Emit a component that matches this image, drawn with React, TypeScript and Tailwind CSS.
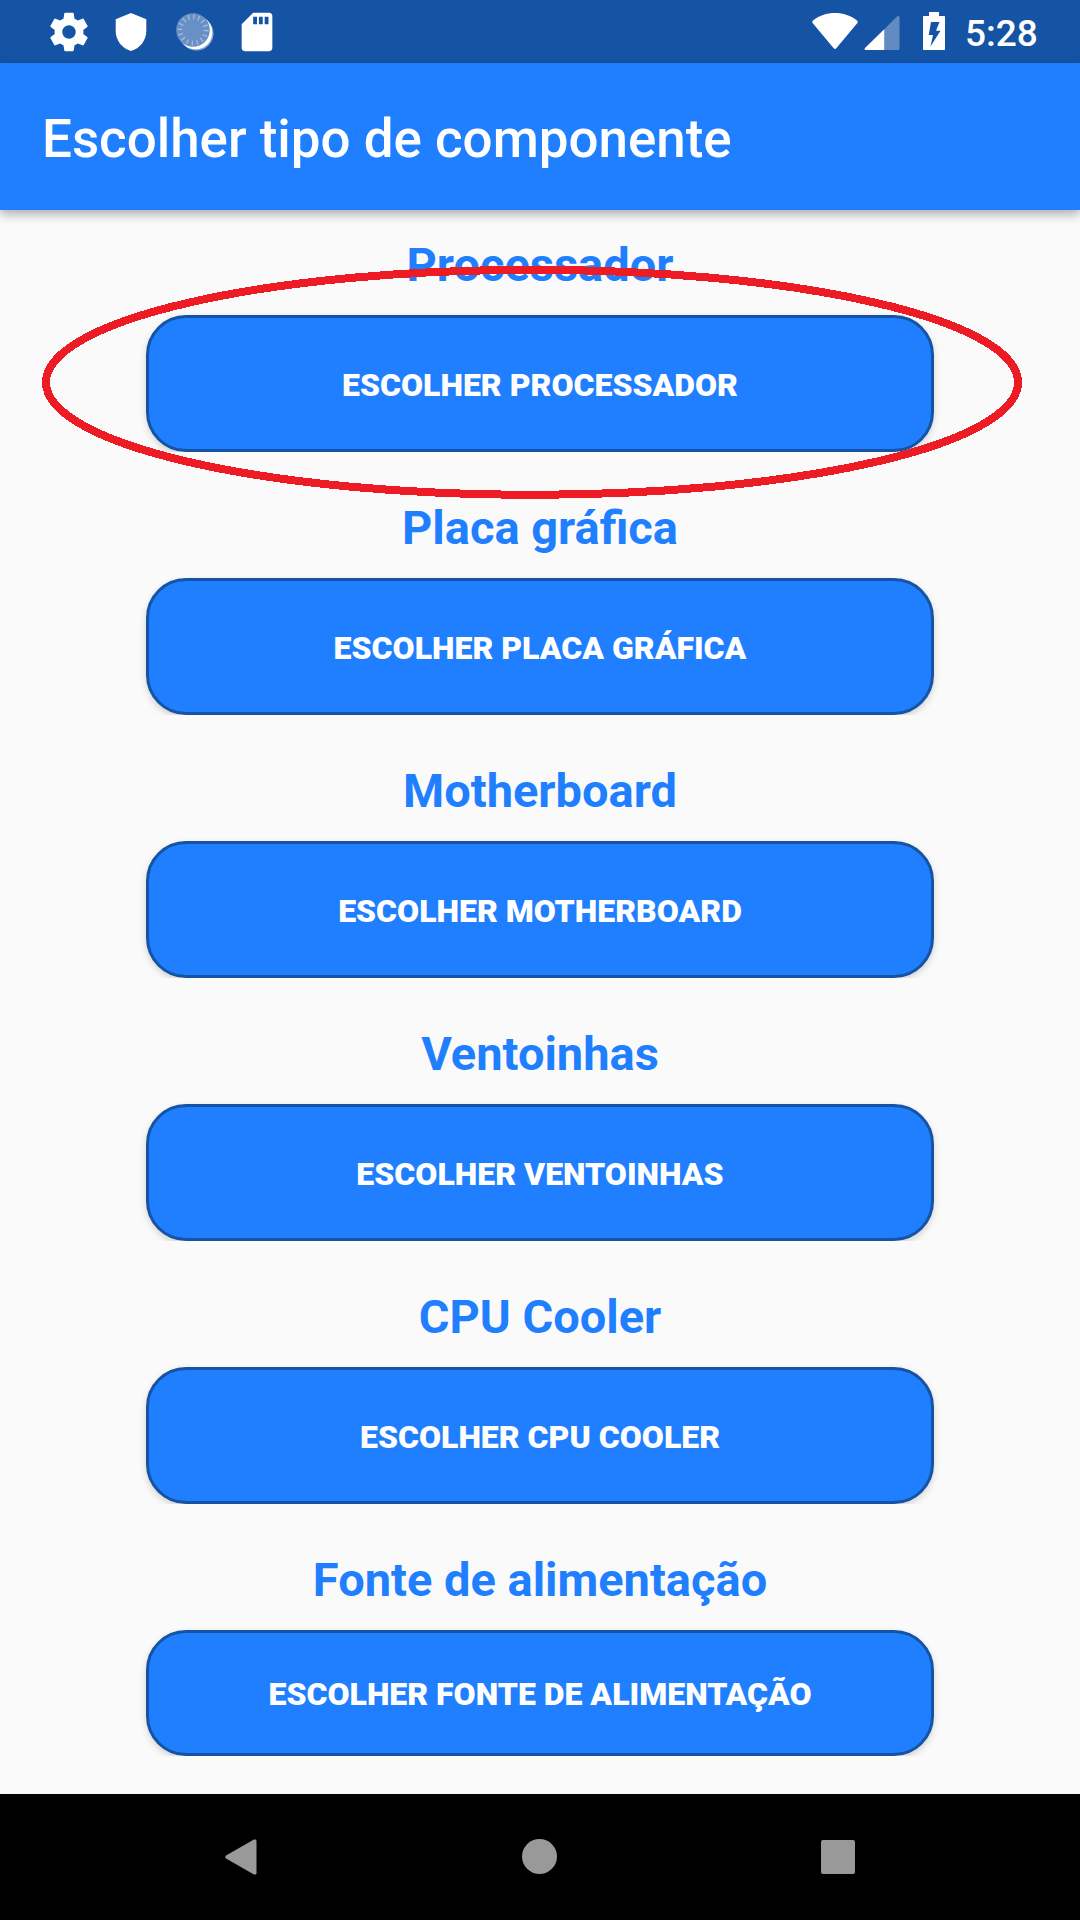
const SECTIONS = [
  { title: 'Processador', action: 'Escolher processador' },
  { title: 'Placa gráfica', action: 'Escolher placa gráfica' },
  { title: 'Motherboard', action: 'Escolher motherboard' },
  { title: 'Ventoinhas', action: 'Escolher ventoinhas' },
  { title: 'CPU Cooler', action: 'Escolher CPU Cooler' },
  { title: 'Fonte de alimentação', action: 'Escolher fonte de alimentação', last: true },
];

function GearIcon() {
  return (
    <svg className="h-[46px] w-[46px]" viewBox="0 0 24 24" fill="#fff">
      <path d="M19.43 12.98c.04-.32.07-.64.07-.98s-.03-.66-.07-.98l2.11-1.65c.19-.15.24-.42.12-.64l-2-3.46c-.12-.22-.39-.3-.61-.22l-2.49 1c-.52-.4-1.08-.73-1.69-.98l-.38-2.65C14.46 2.18 14.25 2 14 2h-4c-.25 0-.46.18-.49.42l-.38 2.65c-.61.25-1.17.59-1.69.98l-2.49-1c-.23-.09-.49 0-.61.22l-2 3.46c-.13.22-.07.49.12.64l2.11 1.65c-.04.32-.07.65-.07.98s.03.66.07.98l-2.11 1.65c-.19.15-.24.42-.12.64l2 3.46c.12.22.39.3.61.22l2.49-1c.52.4 1.08.73 1.69.98l.38 2.65c.03.24.24.42.49.42h4c.25 0 .46-.18.49-.42l.38-2.65c.61-.25 1.17-.59 1.69-.98l2.49 1c.23.09.49 0 .61-.22l2-3.46c.12-.22.07-.49-.12-.64l-2.11-1.65zM12 15.5c-1.93 0-3.5-1.57-3.5-3.5s1.57-3.5 3.5-3.5 3.5 1.57 3.5 3.5-1.57 3.5-3.5 3.5z" />
    </svg>
  );
}

function ShieldIcon() {
  return (
    <svg className="h-[38px] w-[32px]" viewBox="0 0 32 38" fill="#fff">
      <path d="M16 0 31.3 6.2V18c0 9.5-6.5 17.500-15.300 20C7.200 35.500.7 27.500.7 18V6.200Z" />
    </svg>
  );
}

function SpinnerIcon() {
  return (
    <svg className="h-[40px] w-[40px]" viewBox="0 0 40 40">
      <circle cx="20.500" cy="21.500" r="17" fill="#8aaad5" />
      <circle cx="19.500" cy="20.500" r="16.800" fill="#fff" />
      <circle cx="17" cy="18" r="16.800" fill="#6890c6" />
      <circle cx="17" cy="18" r="13" fill="none" stroke="#a3bbdc" strokeWidth="5" strokeDasharray="1.300 3.784" />
    </svg>
  );
}

function SdIcon() {
  return (
    <svg className="h-[46px] w-[46px]" viewBox="0 0 24 24" fill="#fff">
      <path d="M18.400 2H10L4 8v12.400C4 21.300 4.700 22 5.600 22h12.800c.9 0 1.600-.7 1.600-1.600V3.600C20 2.700 19.300 2 18.400 2zM12 8h-2V4h2v4zm3 0h-2V4h2v4zm3 0h-2V4h2v4z" />
    </svg>
  );
}

function WifiIcon() {
  return (
    <svg className="h-[37px] w-[46px]" viewBox="0 0 46 37" fill="#fff">
      <path d="M.8 10.200C-.1 9.300.1 8.300 1 7.600 7 2.600 14.800 0 23 0s16 2.600 22 7.600c.9.7 1.100 1.700.2 2.600L24.300 35.300c-.8.9-1.800.9-2.600 0Z" />
    </svg>
  );
}

function SignalIcon() {
  return (
    <svg className="h-[36px] w-[36px]" viewBox="0 0 36 36">
      <path d="M20 14.500 33 1.500c1-1 2.500-.5 2.500 1V33.500c0 1-.5 1.500-1.500 1.500H20Z" fill="#628bc2" />
      <path d="M20.200 14.300V35H2C.4 35 .1 34 1 33Z" fill="#fff" />
    </svg>
  );
}

function BatteryIcon() {
  return (
    <svg className="h-[38px] w-[22px]" viewBox="0 0 22 38" fill="#fff">
      <path fillRule="evenodd" d="M6 0h10v4h5c.7 0 1 .3 1 1v32c0 .7-.3 1-1 1H1c-.7 0-1-.3-1-1V5c0-.7.3-1 1-1h5ZM8 10 5.700 23H10L7.500 34.500 17.500 18.700H13L16.500 10Z" />
    </svg>
  );
}

function StatusBar() {
  return (
    <div className="flex h-[63px] shrink-0 items-start bg-[#1554a5] text-white">
      <div className="ml-[45.5px] mt-[8.5px]"><GearIcon /></div>
      <div className="ml-[23.5px] mt-[12.5px]"><ShieldIcon /></div>
      <div className="ml-[29px] mt-[12px]"><SpinnerIcon /></div>
      <div className="ml-[18px] mt-[8.5px]"><SdIcon /></div>
      <div className="ml-auto mt-[13px]"><WifiIcon /></div>
      <div className="ml-[6px] mt-[15px]"><SignalIcon /></div>
      <div className="ml-[23px] mt-[12px]"><BatteryIcon /></div>
      <div className="ml-[20px] mr-[42px] mt-[13px] w-[73px] whitespace-nowrap text-[37px] leading-[42px] font-medium">5:28</div>
    </div>
  );
}

function Section({ title, action, last }: { title: string; action: string; last?: boolean }) {
  return (
    <section className="flex h-[263px] shrink-0 flex-col">
      <h2 className="pt-[27px] text-center text-[47px] leading-[56px] font-bold text-[#1f7fff]">{title}</h2>
      <div className="mt-[13px] overflow-hidden px-[146px] pt-[9px]">
        <button
          className={`flex w-full items-center justify-center rounded-[40px] border-3 border-[#1554a5] bg-[#1f7fff] text-[32px] font-black uppercase text-white shadow-[0_3px_7px_rgba(0,0,0,0.16)] ${last ? 'h-[126px] pt-px' : 'h-[137px] pt-[3px]'}`}
        >
          {action}
        </button>
      </div>
    </section>
  );
}

function NavBar() {
  return (
    <nav className="flex h-[126px] shrink-0 items-center bg-black">
      <svg className="ml-[225px] h-[36px] w-[32px]" viewBox="0 0 32 36" fill="#999">
        <path d="M1 19.500C0 18.700 0 17.300 1 16.500L28.500.8C30 0 31.500.3 31.500 2V34c0 1.700-1.500 2-3 1.200Z" />
      </svg>
      <div className="mb-px ml-[265px] h-[35px] w-[35px] rounded-full bg-[#999]" />
      <div className="ml-[264px] h-[34px] w-[34px] rounded-[2px] bg-[#999]" />
    </nav>
  );
}

export default function App() {
  return (
    <div className="relative flex h-[1920px] w-[1080px] flex-col overflow-hidden bg-[#fafafa] font-['Roboto',sans-serif]">
      <StatusBar />
      <header className="z-10 flex h-[147px] shrink-0 items-center bg-[#1f7fff] pl-[42px] pt-[5px] shadow-[0_4px_10px_rgba(0,0,0,0.32)]">
        <h1 className="whitespace-nowrap text-[52.9px] leading-[62px] font-medium text-white">Escolher tipo de componente</h1>
      </header>
      <main className="flex min-h-0 flex-1 flex-col overflow-hidden">
        {SECTIONS.map((s) => (
          <Section key={s.title} {...s} />
        ))}
      </main>
      <NavBar />
      <svg className="pointer-events-none absolute left-[40px] top-[264px] z-20 h-[238px] w-[984px]" viewBox="0 0 984 238" shapeRendering="crispEdges">
        <ellipse cx="492" cy="118.300" rx="486" ry="112.500" fill="none" stroke="#ed1c24" strokeWidth="8" />
      </svg>
    </div>
  );
}
